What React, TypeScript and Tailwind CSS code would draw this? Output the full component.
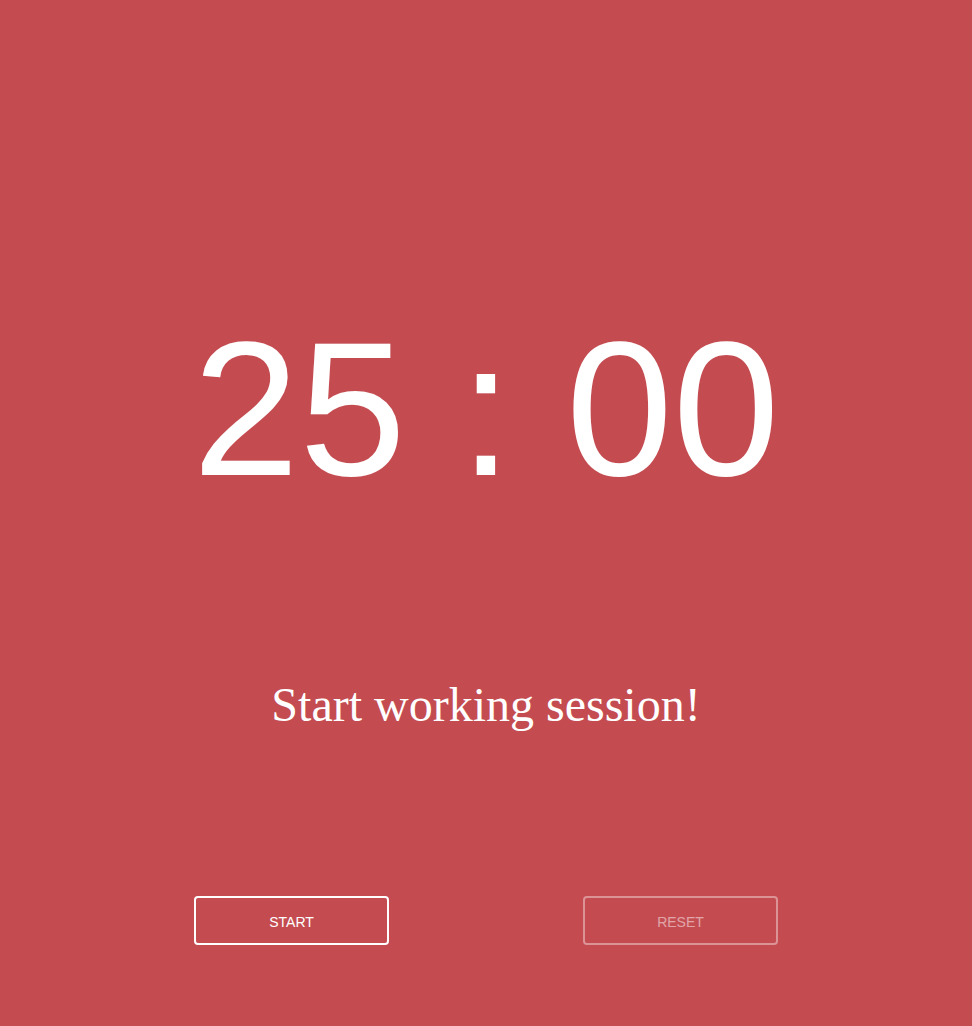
import { useState } from 'react';

export default function App() {
  const [seconds] = useState(25 * 60);
  const mm = String(Math.floor(seconds / 60)).padStart(2, '0');
  const ss = String(seconds % 60).padStart(2, '0');

  return (
    <div className="min-h-screen w-full bg-[#c44c51] flex flex-col items-center text-white">
      <div className="pt-[299px] font-['Liberation_Sans',Arial,sans-serif] text-[192px] leading-[220px] whitespace-pre">
        {mm} : {ss}
      </div>
      <p className="mt-[157px] font-['Liberation_Serif','Times_New_Roman',serif] text-[48px] leading-[57px]">
        Start working session!
      </p>
      <div className="mt-[163px] w-[584px] flex justify-between font-['Liberation_Sans',Arial,sans-serif] text-sm">
        <button className="w-[195px] h-[49px] pt-[2px] border-2 border-white rounded-[4px] uppercase text-white">
          Start
        </button>
        <button className="w-[195px] h-[49px] pt-[2px] border-2 border-white/40 rounded-[4px] uppercase text-white/50">
          Reset
        </button>
      </div>
    </div>
  );
}
